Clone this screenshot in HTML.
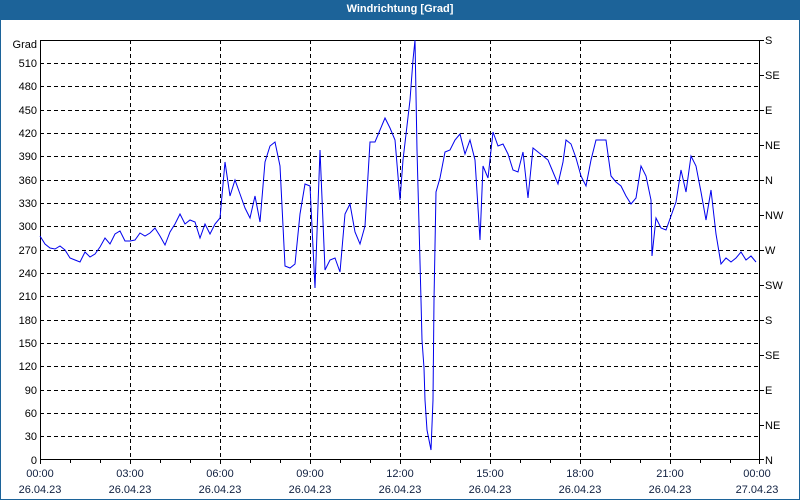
<!DOCTYPE html>
<html><head><style>
html,body{margin:0;padding:0;background:#fff}
body{width:800px;height:500px;position:relative;overflow:hidden;font-family:"Liberation Sans",sans-serif;font-size:11px;color:#000}
.tb{position:absolute;left:0;top:0;width:800px;height:20px;background:#1c6399;color:#fff;font-weight:bold;text-align:center;line-height:19px;font-size:11px}
.frame{position:absolute;left:0;top:20px;width:798px;height:479px;border:1px solid #1c6399;border-top:0}
</style></head><body>
<div class="tb">Windrichtung [Grad]</div>
<div class="frame"></div>
<svg width="800" height="500" style="position:absolute;left:0;top:0" font-family="Liberation Sans, sans-serif" font-size="11">
<g stroke="#000" stroke-dasharray="4,3" stroke-width="1" shape-rendering="crispEdges">
<path d="M130.5 40V460M220.5 40V460M310.5 40V460M400.5 40V460M490.5 40V460M580.5 40V460M670.5 40V460"/>
<path d="M40 63.5H760M40 86.5H760M40 110.5H760M40 133.5H760M40 156.5H760M40 180.5H760M40 203.5H760M40 226.5H760M40 250.5H760M40 273.5H760M40 296.5H760M40 320.5H760M40 343.5H760M40 366.5H760M40 390.5H760M40 413.5H760M40 436.5H760"/>
</g>
<g stroke="#000" stroke-width="1" fill="none" shape-rendering="crispEdges">
<rect x="40.5" y="40.5" width="719" height="419"/>
<path d="M40.5 460v4M70.5 460v3M100.5 460v3M130.5 460v4M160.5 460v3M190.5 460v3M220.5 460v4M250.5 460v3M280.5 460v3M310.5 460v4M340.5 460v3M370.5 460v3M400.5 460v4M430.5 460v3M460.5 460v3M490.5 460v4M520.5 460v3M550.5 460v3M580.5 460v4M610.5 460v3M640.5 460v3M670.5 460v4M700.5 460v3M730.5 460v3M759.5 460v4"/>
<path d="M760 40.5h4M760 75.5h4M760 110.5h4M760 145.5h4M760 180.5h4M760 215.5h4M760 250.5h4M760 285.5h4M760 320.5h4M760 355.5h4M760 390.5h4M760 425.5h4M760 459.5h4"/>
</g>
<polyline fill="none" stroke="#0000ee" stroke-width="1" points="40,236 45,244 50,248 55,249 60,246 65,250 70,258 75,260 80,262 85,252 90,257 95,254 100,247 105,238 110,244 115,234 120,231 125,241 130,241 135,240 140,233 145,236 150,233 155,228 160,236 165,245 170,232 175,224 180,214 185,224 190,220 195,222 200,238 205,224 210,234 215,224 220,218 225,162 230,196 235,180 240,194 245,208 250,218 255,196 260,222 265,162 270,146 275,142 280,166 285,266 290,268 295,264 300,214 305,184 310,186 315,288 320,150 325,270 330,260 335,258 340,272 345,214 350,204 355,232 360,244 365,226 370,142 375,142 380,130 385,118 390,128 395,140 400,200 403,160 410,100 413,60 415,40 417,150 419,224 421,300 422,340 424,368 425,400 427,430 430,445 431,450 432,425 433,400 434,300 436,192 440,178 445,152 450,150 455,140 460,134 465,154 470,140 475,160 480,240 483,166 488,178 493,132 498,146 503,144 508,154 513,170 518,172 523,152 528,198 533,148 538,152 543,156 548,160 553,172 558,184 563,162 566,140 571,144 576,158 581,176 586,186 591,160 596,140 601,140 606,140 611,176 616,182 621,186 626,196 631,204 636,198 641,166 646,176 651,200 652,256 656,218 661,228 666,230 671,216 676,202 681,170 686,192 691,156 696,166 701,192 706,220 711,190 716,234 721,264 726,258 731,262 736,258 741,252 746,260 751,256 756,262"/>
<g text-anchor="end">
<text x="37" y="48">Grad</text>
<text x="37" y="67">510</text><text x="37" y="90">480</text><text x="37" y="114">450</text><text x="37" y="137">420</text><text x="37" y="160">390</text><text x="37" y="184">360</text><text x="37" y="207">330</text><text x="37" y="230">300</text><text x="37" y="254">270</text><text x="37" y="277">240</text><text x="37" y="300">210</text><text x="37" y="324">180</text><text x="37" y="347">150</text><text x="37" y="370">120</text><text x="37" y="394">90</text><text x="37" y="417">60</text><text x="37" y="440">30</text><text x="37" y="464">0</text>
</g>
<g>
<text x="765" y="44">S</text><text x="765" y="79">SE</text><text x="765" y="114">E</text><text x="765" y="149">NE</text><text x="765" y="184">N</text><text x="765" y="219">NW</text><text x="765" y="254">W</text><text x="765" y="289">SW</text><text x="765" y="324">S</text><text x="765" y="359">SE</text><text x="765" y="394">E</text><text x="765" y="429">NE</text><text x="765" y="464">N</text>
</g>
<g text-anchor="middle" fill="#102040">
<text x="40" y="477">00:00</text><text x="130" y="477">03:00</text><text x="220" y="477">06:00</text><text x="310" y="477">09:00</text><text x="400" y="477">12:00</text><text x="490" y="477">15:00</text><text x="580" y="477">18:00</text><text x="670" y="477">21:00</text><text x="757" y="477">00:00</text>
<text x="40" y="493">26.04.23</text><text x="130" y="493">26.04.23</text><text x="220" y="493">26.04.23</text><text x="310" y="493">26.04.23</text><text x="400" y="493">26.04.23</text><text x="490" y="493">26.04.23</text><text x="580" y="493">26.04.23</text><text x="670" y="493">26.04.23</text><text x="757" y="493">27.04.23</text>
</g>
</svg>
</body></html>
